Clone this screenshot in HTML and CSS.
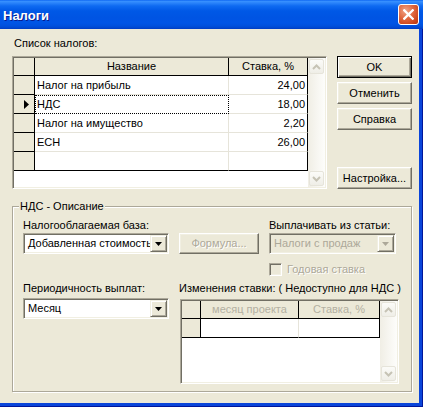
FILE: index.html
```html
<!DOCTYPE html>
<html>
<head>
<meta charset="utf-8">
<title>Налоги</title>
<link rel="stylesheet" href="styles.css">
</head>
<body>
<div class="window">
  <div class="titlebar">
    <span class="title">Налоги</span>
    <span class="close"><svg width="11" height="11" viewBox="0 0 11 11"><path d="M1.3 1.3 L9.7 9.7 M9.7 1.3 L1.3 9.7" stroke="#fff" stroke-width="2.3" stroke-linecap="square" fill="none"/></svg></span>
  </div>
  <div class="frame">
    <div class="client">
      <div class="caption">Список налогов:</div>
      <div class="top">
        <div class="grid grid-main">
          <div class="cells cells-main">
            <div class="c ind hdr"></div><div class="c hdr">Название</div><div class="c hdr last">Ставка, %</div>
            <div class="c ind"></div><div class="c">Налог на прибыль</div><div class="c num last">24,00</div>
            <div class="c ind"><svg class="arrow" width="5" height="9" viewBox="0 0 5 9"><polygon points="0,0 5,4.5 0,9" fill="#000"/></svg></div><div class="c focus">НДС</div><div class="c num last">18,00</div>
            <div class="c ind"></div><div class="c">Налог на имущество</div><div class="c num last">2,20</div>
            <div class="c ind"></div><div class="c">ЕСН</div><div class="c num last">26,00</div>
            <div class="c ind end"></div><div class="c end"></div><div class="c num last end"></div>
          </div>
          <div class="vscroll">
            <div class="sb-btn"><span class="sb-face"><svg width="9" height="6" viewBox="0 0 9 6"><path d="M1 5 L4.5 1.5 L8 5" stroke="#C6C3B5" stroke-width="2" fill="none"/></svg></span></div>
            <div class="sb-track"></div>
            <div class="sb-btn"><span class="sb-face"><svg width="9" height="6" viewBox="0 0 9 6"><path d="M1 1 L4.5 4.5 L8 1" stroke="#C6C3B5" stroke-width="2" fill="none"/></svg></span></div>
          </div>
        </div>
        <div class="buttons">
          <button class="btn default">OK</button>
          <button class="btn">Отменить</button>
          <button class="btn">Справка</button>
          <button class="btn btn-bottom">Настройка...</button>
        </div>
      </div>
      <div class="group">
        <div class="group-title">НДС - Описание</div>
        <div class="group-body">
          <div class="lbl row1 col1">Налогооблагаемая база:</div>
          <div class="lbl row1 col3">Выплачивать из статьи:</div>
          <div class="combo row2 col1 wide"><span class="combo-text">Добавленная стоимость</span><span class="combo-btn"><svg width="7" height="4" viewBox="0 0 7 4"><polygon points="0,0 7,0 3.5,4" fill="#000"/></svg></span></div>
          <button class="btn btn-formula disabled row2 col2">Формула...</button>
          <div class="combo combo-disabled row2 col3 narrow"><span class="combo-text">Налоги с продаж</span><span class="combo-btn"><svg width="7" height="4" viewBox="0 0 7 4"><polygon points="0,0 7,0 3.5,4" fill="#ACA899"/></svg></span></div>
          <div class="check row3 col3"><span class="check-box"></span><span class="dis-text">Годовая ставка</span></div>
          <div class="lbl row4 col1">Периодичность выплат:</div>
          <div class="lbl row4 col23">Изменения ставки: ( Недоступно для НДС )</div>
          <div class="combo row5 col1 wide"><span class="combo-text">Месяц</span><span class="combo-btn"><svg width="7" height="4" viewBox="0 0 7 4"><polygon points="0,0 7,0 3.5,4" fill="#000"/></svg></span></div>
          <div class="grid grid-small row5g col23">
            <div class="cells cells-small">
              <div class="c ind hdr"></div><div class="c hdr dim">месяц проекта</div><div class="c hdr dim last">Ставка, %</div>
              <div class="c ind end"></div><div class="c end"></div><div class="c end last"></div>
            </div>
            <div class="vscroll">
              <div class="sb-btn"><span class="sb-face"><svg width="9" height="6" viewBox="0 0 9 6"><path d="M1 5 L4.5 1.5 L8 5" stroke="#C6C3B5" stroke-width="2" fill="none"/></svg></span></div>
              <div class="sb-track"></div>
              <div class="sb-btn"><span class="sb-face"><svg width="9" height="6" viewBox="0 0 9 6"><path d="M1 1 L4.5 4.5 L8 1" stroke="#C6C3B5" stroke-width="2" fill="none"/></svg></span></div>
            </div>
          </div>
        </div>
      </div>
    </div>
  </div>
</div>
</body>
</html>
```
FILE: styles.css
```css
* { box-sizing: border-box; }
html, body { margin: 0; padding: 0; }
body {
  width: 423px;
  height: 407px;
  overflow: hidden;
  font-family: "Liberation Sans", Arial, sans-serif;
  font-size: 11px;
  color: #000;
  background: #ECE9D8;
}
.window {
  width: 423px;
  height: 407px;
  display: flex;
  flex-direction: column;
}
.titlebar {
  flex: none;
  height: 29px;
  display: flex;
  justify-content: space-between;
  align-items: flex-start;
  padding: 0 4px 0 3px;
  background: linear-gradient(to bottom, #0058EE 0px, #3A93FF 1px, #2A83FA 3px, #0E6AF1 6px, #0058E6 11px, #0054E3 18px, #0055E6 23px, #0050DC 26px, #0046CF 28px, #003BC0 29px);
}
.title {
  font-weight: bold;
  font-size: 13px;
  color: #fff;
  line-height: 27px;
  padding-top: 2px;
  text-shadow: 1px 1px 0 #0A1C8C;
}
.close {
  margin-top: 4px;
  width: 21px;
  height: 21px;
  border: 1px solid #fff;
  border-radius: 3px;
  background: radial-gradient(circle at 35% 30%, #F0A488 0%, #E0673F 45%, #C9441B 80%, #B5360E 100%);
  display: flex;
  align-items: center;
  justify-content: center;
}
.frame {
  flex: 1;
  display: flex;
  padding: 0 4px 4px 0;
  background: #0A45DA;
  box-shadow: inset -1px -1px 0 #00169A;
}
.client {
  flex: 1;
  background: #ECE9D8;
  padding: 8px 7px 0 12px;
}
.caption {
  padding-left: 2px;
  line-height: 13px;
}
.top {
  display: flex;
  gap: 10px;
  margin-top: 6px;
}

/* grids */
.grid {
  display: flex;
  border: 1px solid;
  border-color: #ACA899 #fff #fff #ACA899;
  box-shadow: inset 1px 1px 0 #716F64, inset -1px -1px 0 #F1EFE2;
  padding: 1px;
  background: #fff;
}
.grid-main { width: 315px; height: 133px; }
.grid-small { width: 219px; height: 85px; }
.cells {
  flex: 1;
  display: grid;
  align-content: start;
  background: #fff;
  grid-auto-rows: 19px;
}
.cells-main { grid-template-columns: 21px 194px 79px; grid-template-rows: 18px; }
.cells-small { grid-template-columns: 19px 98px 81px; grid-template-rows: 18px; }
.c {
  border-right: 1px solid #E6E4DA;
  border-bottom: 1px solid #E6E4DA;
  padding: 0 2px;
  line-height: 18px;
  white-space: nowrap;
  overflow: hidden;
}
.hdr {
  background: #ECE9D8;
  border-color: #000;
  text-align: center;
  line-height: 16px;
}
.ind {
  background: #ECE9D8;
  border-color: #000;
  display: flex;
  align-items: center;
  padding-left: 10px;
}
.last { border-right-color: #000; }
.end { border-bottom-color: #000; }
.num { text-align: right; }
.dim { color: #B3B0A2; }
.focus {
  border: 1px dotted #000;
  padding-left: 1px;
  line-height: 17px;
}
.arrow { display: block; }

.vscroll {
  width: 17px;
  flex: none;
  display: flex;
  flex-direction: column;
  background: linear-gradient(to right, #F0EEE5, #FDFDFB);
}
.sb-track { flex: 1; }
.sb-btn {
  height: 17px;
  padding: 1px;
}
.sb-face {
  width: 15px;
  height: 15px;
  display: flex;
  align-items: center;
  justify-content: center;
  border: 1px solid #E6E4DA;
  border-radius: 2px;
  background: linear-gradient(to bottom, #FBFBF8, #EFEEE7);
}

/* buttons */
.buttons {
  display: flex;
  flex-direction: column;
  gap: 4px;
  width: 75px;
}
.btn {
  width: 75px;
  height: 22px;
  margin: 0;
  padding: 0;
  font-family: "Liberation Sans", Arial, sans-serif;
  font-size: 11px;
  color: #000;
  line-height: 20px;
  text-align: center;
  background: #ECE9D8;
  border: 1px solid;
  border-color: #fff #716F64 #716F64 #fff;
  box-shadow: inset -1px -1px 0 #ACA899, inset 1px 1px 0 #F1EFE2;
  border-radius: 0;
  appearance: none;
}
.btn.default {
  border-color: #000;
  box-shadow: inset 1px 1px 0 #fff, inset -1px -1px 0 #716F64, inset -2px -2px 0 #ACA899;
}
.btn-bottom { margin-top: auto; }
.btn.disabled {
  color: #ACA899;
  text-shadow: 1px 1px 0 #fff;
}
.btn-formula { width: 80px; height: 21px; line-height: 19px; }

/* group */
.group {
  margin-top: 17px;
  width: 400px;
  height: 186px;
  border: 1px solid #ACA899;
  box-shadow: 1px 1px 0 #fff, inset 1px 1px 0 #fff;
}
.group-title {
  width: fit-content;
  margin: -7px 0 0 6px;
  padding: 0 1px;
  line-height: 13px;
  background: #ECE9D8;
}
.group-body {
  display: grid;
  grid-template-columns: 156px 90px 128px;
  align-items: start;
  padding-left: 10px;
}
.lbl { line-height: 13px; white-space: nowrap; }
.row1 { grid-row: 1; margin-top: 6px; }
.row2 { grid-row: 2; margin-top: 1px; }
.row3 { grid-row: 3; margin-top: 9px; }
.row4 { grid-row: 4; margin-top: 6px; }
.row5 { grid-row: 5; margin-top: 3px; }
.row5g { grid-row: 5; margin-top: 4px; margin-left: 1px; }
.col1 { grid-column: 1; }
.col2 { grid-column: 2; }
.col3 { grid-column: 3; }
.col23 { grid-column: 2 / span 2; }

.combo {
  display: flex;
  height: 21px;
  padding: 1px;
  border: 1px solid;
  border-color: #ACA899 #fff #fff #ACA899;
  box-shadow: inset 1px 1px 0 #716F64, inset -1px -1px 0 #F1EFE2;
  background: #fff;
}
.combo.wide { width: 146px; }
.combo.narrow { width: 127px; }
.combo-text {
  flex: 1;
  min-width: 0;
  overflow: hidden;
  white-space: nowrap;
  padding-left: 3px;
  line-height: 17px;
}
.combo-btn {
  flex: none;
  width: 17px;
  height: 17px;
  display: flex;
  align-items: center;
  justify-content: center;
  background: #ECE9D8;
  border: 1px solid;
  border-color: #F1EFE2 #716F64 #716F64 #F1EFE2;
  box-shadow: inset 1px 1px 0 #fff, inset -1px -1px 0 #ACA899;
}
.combo-disabled { background: #ECE9D8; }
.combo-disabled .combo-text { color: #ACA899; }

.check {
  display: flex;
  align-items: center;
  height: 13px;
}
.check-box {
  width: 13px;
  height: 13px;
  border: 1px solid;
  border-color: #ACA899 #fff #fff #ACA899;
  box-shadow: inset 1px 1px 0 #716F64, inset -1px -1px 0 #F1EFE2;
  background: #ECE9D8;
}
.dis-text {
  margin-left: 5px;
  line-height: 13px;
  color: #ACA899;
  text-shadow: 1px 1px 0 #fff;
}
```
